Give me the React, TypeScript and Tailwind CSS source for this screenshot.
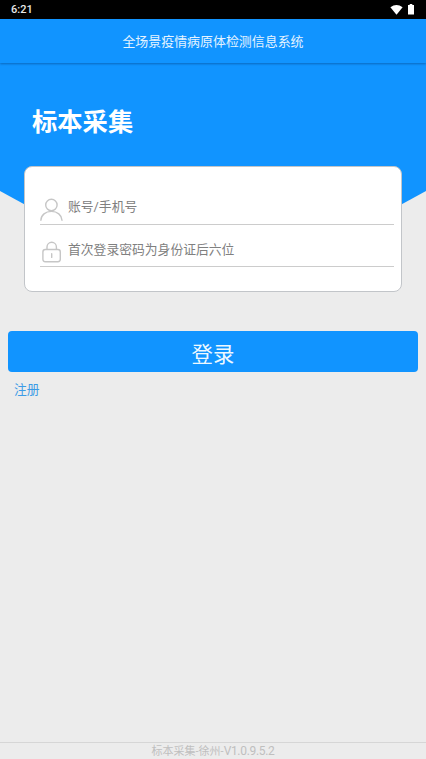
import React from "react";

function StatusBar() {
  return (
    <div className="flex h-[19px] shrink-0 items-center justify-between bg-black pl-[11px] pr-[12px] text-[#e8e8e8]">
      <span className="text-[11px] font-medium leading-[19px]">6:21</span>
      <div className="flex items-center gap-[5px]">
        <svg width="13" height="10" viewBox="0 0 13 10" fill="#fff">
          <path d="M.4 2.2Q6.5-2 12.6 2.2L6.5 9.8Z" />
        </svg>
        <svg width="6" height="11" viewBox="0 0 6 11" fill="#fff">
          <path d="M1.7 0h2.6v1H6v9.6H0V1h1.7Z" />
        </svg>
      </div>
    </div>
  );
}

function UserIcon() {
  return (
    <svg className="shrink-0" width="24" height="24" viewBox="0 0 24 24" fill="none" stroke="#c6c6c6" strokeWidth="1.4" strokeLinecap="round">
      <circle cx="11.4" cy="7" r="5.7" />
      <path d="M.9 22.2C1.1 17 5.5 13.4 11.4 13.4S21.7 17 22 22.2" />
    </svg>
  );
}

function LockIcon() {
  return (
    <svg className="shrink-0" width="24" height="24" viewBox="0 0 24 24" fill="none" stroke="#c6c6c6" strokeWidth="1.4" strokeLinecap="round">
      <rect x="2.9" y="9.5" width="17.4" height="12.2" rx="2.4" />
      <path d="M7 9.3V7A4.7 4.7 0 0 1 16.4 7V9.3M11.7 13.8V17.4" />
    </svg>
  );
}

export default function App() {
  return (
    <div className="flex h-[759px] w-[426px] flex-col overflow-hidden bg-[#ececec] font-[Roboto,'Noto_Sans_CJK_SC',sans-serif]">
      <StatusBar />
      <header className="z-10 flex h-[44px] shrink-0 items-center justify-center bg-[#1194ff] text-[12.95px] text-[#e4f3ff] shadow-[0_1px_2px_rgba(0,40,90,0.4)]">
        <h1 className="pt-[2px] leading-[20px]">全场景疫情病原体检测信息系统</h1>
      </header>
      <main className="flex flex-1 flex-col">
        <section className="relative h-[229px]">
          <div className="absolute inset-0 bg-[#1194ff] [clip-path:polygon(0_0,100%_0,100%_128px,340px_175px,86px_175px,0_128px)]" />
          <div className="relative px-6 pt-[41px]">
            <h2 className="pl-2 text-[25.3px] font-bold leading-[38px] text-white">标本采集</h2>
            <form className="mt-[24px] h-[126px] rounded-[8px] border border-[#c2c5c9] bg-white pl-[15px] pr-[7px] pt-[29px]">
              <label className="flex h-[29px] border-b border-[#cccccc] pt-[2px]">
                <UserIcon />
                <span className="ml-1 mt-[-1px] text-[12.8px] leading-[20px] text-[#808080]">账号/手机号</span>
              </label>
              <label className="flex h-[42px] border-b border-[#cccccc] pt-[15px]">
                <LockIcon />
                <span className="ml-1 text-[12.8px] leading-[20px] text-[#808080]">首次登录密码为身份证后六位</span>
              </label>
            </form>
          </div>
        </section>
        <button className="mx-2 mt-[39px] h-[41px] rounded-[4px] bg-[#1194ff] pt-[7px] text-[21.4px] leading-[34px] text-[#eef8ff]">登录</button>
        <a className="ml-[14px] mt-[8px] self-start text-[12.8px] leading-[20px] text-[#3c9be6]">注册</a>
      </main>
      <footer className="flex h-[17px] shrink-0 items-center justify-center border-t border-[#d6d6d6] pt-[1px] text-[11px] leading-[16px] text-[#bfbfbf]">
        <span>标本采集-徐州-<span className="text-[12px] tracking-[-0.32px]">V1.0.9.5.2</span></span>
      </footer>
    </div>
  );
}
